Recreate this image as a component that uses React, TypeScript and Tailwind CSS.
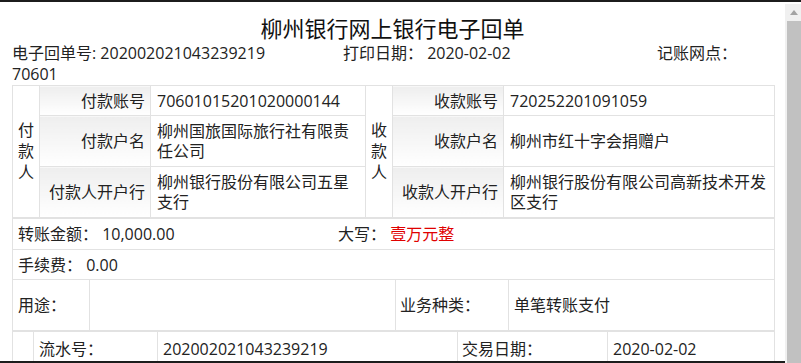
const line = "border border-[#e2e2e2]";
const label = "border border-[#e2e2e2] bg-linear-to-b from-[#eeeeee] to-white text-right pr-[5px] align-middle";
const value = "border border-[#e2e2e2] pl-[6px] pr-[6px] leading-[20px] align-middle";

function Scrollbar() {
  return (
    <div className="mt-[2px] flex w-[16px] flex-col bg-[#f0f0f0]">
      <div className="flex h-[17px] items-center justify-center pl-[1px]">
        <svg width="8" height="5" viewBox="0 0 8 5">
          <path d="M0 5 L4 0 L8 5 Z" fill="#a3a3a3" />
        </svg>
      </div>
      <div className="ml-[2px] flex-1 bg-[#c1c1c1]" />
    </div>
  );
}

function PartyTable() {
  return (
    <table className="w-[762px] table-fixed border-collapse border border-[#e2e2e2]">
      <colgroup>
        <col className="w-[27px]" />
        <col className="w-[111px]" />
        <col className="w-[215px]" />
        <col className="w-[27px]" />
        <col className="w-[111px]" />
        <col className="w-[271px]" />
      </colgroup>
      <tbody>
        <tr className="h-[30px]">
          <td rowSpan={3} className={`${line} text-center leading-[21px]`}>付款人</td>
          <td className={label}>付款账号</td>
          <td className={value}>70601015201020000144</td>
          <td rowSpan={3} className={`${line} text-center leading-[21px]`}>收款人</td>
          <td className={label}>收款账号</td>
          <td className={value}>720252201091059</td>
        </tr>
        <tr className="h-[51px]">
          <td className={label}>付款户名</td>
          <td className={value}>柳州国旅国际旅行社有限责任公司</td>
          <td className={label}>收款户名</td>
          <td className={value}>柳州市红十字会捐赠户</td>
        </tr>
        <tr className="h-[51px]">
          <td className={label}>付款人开户行</td>
          <td className={value}>柳州银行股份有限公司五星支行</td>
          <td className={label}>收款人开户行</td>
          <td className={value}>柳州银行股份有限公司高新技术开发区支行</td>
        </tr>
      </tbody>
    </table>
  );
}

function AmountTable() {
  return (
    <table className="w-[762px] table-fixed border-collapse border border-[#e2e2e2]">
      <colgroup>
        <col className="w-[77px]" />
        <col className="w-[306px]" />
        <col className="w-[113px]" />
        <col className="w-[266px]" />
      </colgroup>
      <tbody>
        <tr className="h-[31px]">
          <td colSpan={4} className={`${line} pl-[5px]`}>
            <span className="inline-block w-[320px]">转账金额： 10,000.00</span>
            <span>大写： </span>
            <span className="text-[#e00000]">壹万元整</span>
          </td>
        </tr>
        <tr className="h-[30px]">
          <td colSpan={4} className={`${line} pl-[5px]`}>手续费： 0.00</td>
        </tr>
        <tr className="h-[51px]">
          <td className={`${line} pl-[5px]`}>用途：</td>
          <td className={line}></td>
          <td className={`${line} pl-[4px]`}>业务种类：</td>
          <td className={`${line} pl-[5px]`}>单笔转账支付</td>
        </tr>
      </tbody>
    </table>
  );
}

function SerialTable() {
  return (
    <table className="w-[762px] table-fixed border-collapse border border-[#e2e2e2]">
      <colgroup>
        <col className="w-[21px]" />
        <col className="w-[124px]" />
        <col className="w-[300px]" />
        <col className="w-[150px]" />
        <col className="w-[167px]" />
      </colgroup>
      <tbody>
        <tr className="h-[34px]">
          <td className={line}></td>
          <td className={`${line} pl-[5px]`}>流水号：</td>
          <td className={`${line} pl-[5px]`}>202002021043239219</td>
          <td className={`${line} pl-[4px]`}>交易日期：</td>
          <td className={`${line} pl-[5px]`}>2020-02-02</td>
        </tr>
      </tbody>
    </table>
  );
}

export default function App() {
  return (
    <div className="flex h-[363px] w-[801px] border-t-2 border-[#1c1c1c] bg-white font-['Open_Sans','Noto_Sans_CJK_SC',sans-serif] text-[16px] text-[#222]">
      <div className="h-full w-[785px] overflow-hidden border-b-2 border-[#1c1c1c]">
        <h1 className="mt-[11px] text-center text-[22px] leading-[30px] font-normal text-[#111]">柳州银行网上银行电子回单</h1>
        <div className="flex pl-[12px] leading-[21px]">
          <span className="w-[331px]">电子回单号: 202002021043239219</span>
          <span className="w-[314px]">打印日期： 2020-02-02</span>
          <span>记账网点：</span>
        </div>
        <div className="pl-[12px] leading-[21px]">70601</div>
        <div className="ml-[12px] flex flex-col">
          <PartyTable />
          <AmountTable />
          <SerialTable />
        </div>
      </div>
      <Scrollbar />
    </div>
  );
}
